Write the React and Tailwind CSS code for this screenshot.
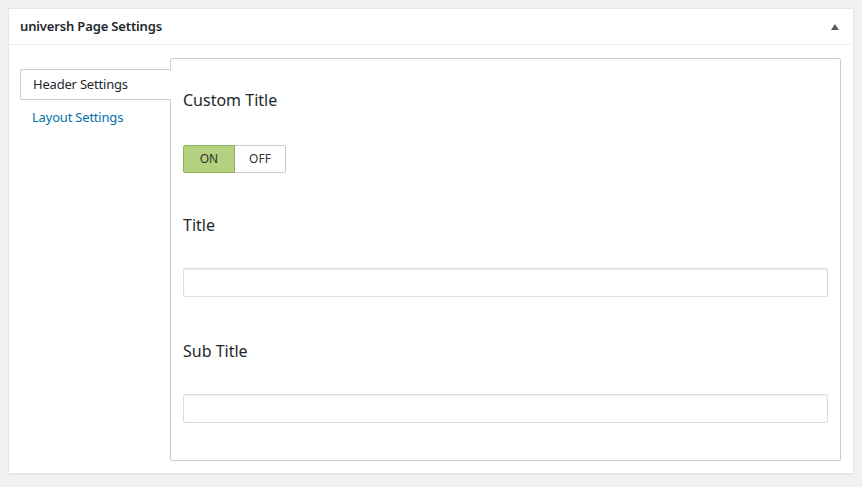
const font = { fontFamily: '"Noto Sans", "Open Sans", sans-serif' };

function Toggle() {
  return (
    <div className="flex h-[28px] w-[103px] text-[12px] text-[#333]">
      <button className="flex-1 rounded-l-[2px] border border-[#8fae5e] bg-[#b4d17f]">ON</button>
      <button className="flex-1 rounded-r-[2px] border border-l-0 border-[#ccc] bg-white">OFF</button>
    </div>
  );
}

export default function App() {
  return (
    <div className="min-h-[487px] bg-[#f1f1f1] pt-2" style={font}>
      <div className="ml-2 h-[466px] w-[846px] border border-[#e5e5e5] bg-white shadow-[0_1px_1px_rgba(0,0,0,0.04)]">
        <div className="flex h-[36px] items-center justify-between border-b border-[#eee] pl-[11px] pr-[14px]">
          <h2 className="text-[13px] font-semibold tracking-[-0.15px] text-[#23282d]">universh Page Settings</h2>
          <svg width="8" height="6" viewBox="0 0 8 6">
            <path d="M4 0 L8 6 L0 6 Z" fill="#555d66" />
          </svg>
        </div>
        <div className="flex pl-[11px] pr-[12px] pt-[13px]">
          <ul className="w-[150px] shrink-0 pt-[11px] text-[13px] tracking-[-0.2px]">
            <li className="relative z-10 -mr-px flex h-[31px] items-center rounded-l-[2px] border border-r-0 border-[#ccc] bg-white pl-3 text-[#23282d]">
              Header Settings
            </li>
            <li className="flex h-[36px] items-center pl-3 text-[#0073aa]">Layout Settings</li>
          </ul>
          <div className="h-[403px] flex-1 rounded-[2px] border border-[#ccc] px-3 pt-[29px]">
            <h3 className="text-[16px] leading-[24px] text-[#23282d]">Custom Title</h3>
            <div className="mt-[33px]">
              <Toggle />
            </div>
            <h3 className="mt-[40px] text-[16px] leading-[24px] text-[#23282d]">Title</h3>
            <input className="mt-[31px] block h-[29px] w-full rounded-[2px] border border-[#ddd] shadow-[inset_0_1px_2px_rgba(0,0,0,0.07)] outline-none" />
            <h3 className="mt-[42px] text-[16px] leading-[24px] text-[#23282d]">Sub Title</h3>
            <input className="mt-[31px] block h-[29px] w-full rounded-[2px] border border-[#ddd] shadow-[inset_0_1px_2px_rgba(0,0,0,0.07)] outline-none" />
          </div>
        </div>
      </div>
    </div>
  );
}
